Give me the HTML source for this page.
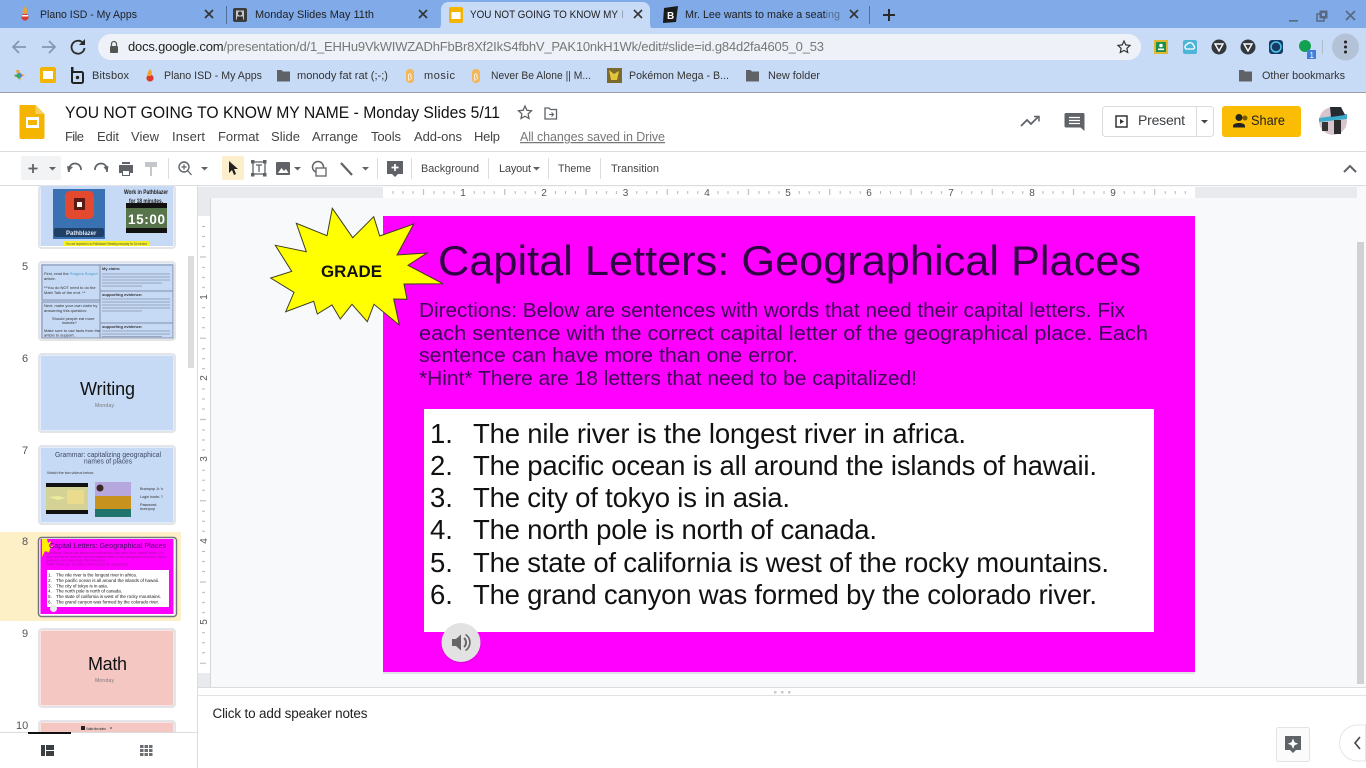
<!DOCTYPE html>
<html><head><meta charset="utf-8"><title>YOU NOT GOING TO KNOW MY NAME - Monday Slides 5/11</title>
<style>
html,body{margin:0;padding:0;width:1366px;height:768px;overflow:hidden;background:#fff}
svg{display:block}
text{font-family:"Liberation Sans",sans-serif;white-space:pre}
.tab{font-size:11px;fill:#202124}
.bm{font-size:11px;fill:#333}
.menu{font-size:13px;fill:#444}
.tb{font-size:11px;fill:#444}
.num{font-size:11px;fill:#555}
.r{font-size:10px;fill:#555}
.li{font-size:27.5px;fill:#111}
.dir{font-size:20px;fill:#3c0555}
.g{fill:#5f6368}
.s{stroke:#5f6368;fill:none;stroke-width:1.6}
.th{fill:#222}
</style></head><body>
<svg width="1366" height="768" viewBox="0 0 1366 768" xmlns="http://www.w3.org/2000/svg">
<defs>
<pattern id="rh" x="382.5" y="187" width="81.25" height="11" patternUnits="userSpaceOnUse">
<g fill="#b5b5b5"><rect x="10" y="4" width="1" height="3"/><rect x="20" y="4" width="1" height="3"/><rect x="30" y="4" width="1" height="3"/><rect x="40.5" y="2" width="1" height="6"/><rect x="51" y="4" width="1" height="3"/><rect x="61" y="4" width="1" height="3"/><rect x="71" y="4" width="1" height="3"/></g>
</pattern>
<pattern id="rv" x="198" y="216" width="12" height="81.25" patternUnits="userSpaceOnUse">
<g fill="#b5b5b5"><rect x="4" y="10" width="3" height="1"/><rect x="4" y="20" width="3" height="1"/><rect x="4" y="30" width="3" height="1"/><rect x="2" y="40.5" width="6" height="1"/><rect x="4" y="51" width="3" height="1"/><rect x="4" y="61" width="3" height="1"/><rect x="4" y="71" width="3" height="1"/></g>
</pattern>
</defs>

<!-- Browser chrome -->
<rect x="0" y="0" width="1366" height="30" fill="#80abe8"/>
<rect x="0" y="28" width="1366" height="64" fill="#c8dbf6"/>
<rect x="0" y="92" width="1366" height="1" fill="#9a9fa8"/>
<path d="M434 30c5 0 7-2 7-7V10c0-5 3-8 8-8h193c5 0 8 3 8 8v13c0 5 2 7 7 7z" fill="#c8dbf6"/>

<!-- tab 1 -->
<circle cx="25" cy="17" r="3.6" fill="#d93a2b"/><path d="M25 6c2 3 3 5 1 8h-3c-1-3 0-5 2-8z" fill="#eda32e"/><rect x="22" y="15" width="6" height="1.5" fill="#fff"/>
<text class="tab" x="40" y="18" textLength="97" lengthAdjust="spacingAndGlyphs">Plano ISD - My Apps</text>
<path d="M205 10l8 8M213 10l-8 8" stroke="#333" stroke-width="1.6"/>
<rect x="226" y="6" width="1" height="18" fill="#4f6f9e"/>
<!-- tab 2 -->
<rect x="233" y="8" width="14" height="14" rx="2" fill="#3b3b3b"/><rect x="236" y="10.5" width="8" height="9" fill="#c8c8c8"/><circle cx="240" cy="13.5" r="2" fill="#333"/><rect x="237" y="16.5" width="6" height="3" fill="#333"/>
<text class="tab" x="255" y="18" textLength="119" lengthAdjust="spacingAndGlyphs">Monday Slides May 11th</text>
<path d="M419 10l8 8M427 10l-8 8" stroke="#333" stroke-width="1.6"/>
<!-- tab 3 -->
<rect x="449" y="7" width="14" height="16" rx="2" fill="#f4b400"/><rect x="451.5" y="12" width="9" height="7" fill="#fff"/>
<text class="tab" x="470" y="18" textLength="148" lengthAdjust="spacingAndGlyphs">YOU NOT GOING TO KNOW MY</text>
<text class="tab" x="621" y="18" style="font-size:11px;fill:#9aa6b8">I</text>
<path d="M634 10l8 8M642 10l-8 8" stroke="#333" stroke-width="1.6"/>
<!-- tab 4 -->
<path d="M664 8l14-2-2 16-13 1z" fill="#1b1b1b"/><text x="667" y="19" style="font-size:10px;font-weight:700" fill="#fff">B</text>
<text class="tab" x="685" y="18" textLength="155" lengthAdjust="spacingAndGlyphs">Mr. Lee wants to make a seating</text>
<rect x="826" y="6" width="16" height="18" fill="#80abe8" opacity=".55"/>
<path d="M850 10l8 8M858 10l-8 8" stroke="#333" stroke-width="1.6"/>
<rect x="869" y="6" width="1" height="18" fill="#4f6f9e"/>
<path d="M889 9v12M883 15h12" stroke="#2a2a2a" stroke-width="2"/>
<!-- window ctrls -->
<rect x="1289" y="20" width="9" height="1.6" fill="#59697f"/>
<rect x="1317" y="14" width="7" height="7" fill="none" stroke="#59697f" stroke-width="1.5"/><rect x="1320" y="11" width="7" height="7" fill="#59697f" stroke="#59697f"/><rect x="1322" y="13" width="3" height="3" fill="#80abe8"/>
<path d="M1346 16l9 9M1355 16l-9 9" stroke="#59697f" stroke-width="1.7" transform="translate(0,-5)"/>

<!-- toolbar -->
<path d="M26 47H14M19 41l-6 6 6 6" fill="none" stroke="#8497b2" stroke-width="1.7"/>
<path d="M42 47h12M49 41l6 6-6 6" fill="none" stroke="#8497b2" stroke-width="1.7"/>
<path d="M83 43a6.5 6.5 0 1 0 1.5 5" fill="none" stroke="#2b2b2b" stroke-width="1.8"/><path d="M85 39v6h-6z" fill="#2b2b2b"/>
<rect x="98" y="34" width="1043" height="26" rx="13" fill="#eef2f8"/>
<rect x="110" y="46" width="8" height="7" rx="1" fill="#555"/><path d="M111.5 46v-2a2.5 2.5 0 0 1 5 0v2" fill="none" stroke="#555" stroke-width="1.2"/>
<text x="128" y="51" textLength="696" style="font-size:13px" fill="#777"><tspan fill="#222">docs.google.com</tspan>/presentation/d/1_EHHu9VkWIWZADhFbBr8Xf2IkS4fbhV_PAK10nkH1Wk/edit#slide=id.g84d2fa4605_0_53</text>
<path d="M1124 41l1.8 3.9 4.2.5-3.1 2.9.8 4.2-3.7-2.1-3.7 2.1.8-4.2-3.1-2.9 4.2-.5z" fill="none" stroke="#333" stroke-width="1.2"/>
<!-- extensions -->
<rect x="1154" y="40" width="14" height="14" fill="#e0b82f"/><rect x="1156" y="42" width="10" height="10" fill="#1e8e4e"/><circle cx="1161" cy="45.5" r="1.8" fill="#fff"/><rect x="1158" y="48.5" width="6" height="1.6" fill="#fff"/>
<rect x="1183" y="40" width="14" height="14" rx="2" fill="#4fb5d8"/><path d="M1186 49a2.5 2.5 0 0 1 1-4.5a3.5 3.5 0 0 1 6.500 1a2 2 0 0 1 0 3.500z" fill="none" stroke="#fff" stroke-width="1.3"/>
<circle cx="1219" cy="47" r="7.500" fill="#33383e"/><path d="M1215 44h8l-4 7z" fill="none" stroke="#fff" stroke-width="1.400"/>
<circle cx="1248" cy="47" r="7.500" fill="#33383e"/><path d="M1244 44h8l-4 7z" fill="none" stroke="#fff" stroke-width="1.400"/>
<rect x="1269" y="40" width="14" height="14" rx="3" fill="#163a66"/><circle cx="1276" cy="47" r="5" fill="none" stroke="#50c8e8" stroke-width="1.500"/>
<circle cx="1305" cy="46" r="6" fill="#12a150"/><rect x="1307" y="50" width="9" height="9" fill="#3f7fd9"/><text x="1309.500" y="58" style="font-size:8px" fill="#fff">1</text>
<rect x="1322" y="40" width="1" height="14" fill="#aebccc"/>
<circle cx="1345.500" cy="47" r="13.500" fill="#b3c2d6"/><circle cx="1345.500" cy="42" r="1.500" fill="#222"/><circle cx="1345.500" cy="47" r="1.500" fill="#222"/><circle cx="1345.500" cy="52" r="1.500" fill="#222"/>

<!-- bookmarks -->
<path d="M19 70l2 4 4 1-4 2-1 4-2-4-4 0 3-3-1-4z" fill="#e8a33a"/><circle cx="19.500" cy="75.500" r="2.500" fill="#4a86d8"/><path d="M14 75l5-1v5z" fill="#3aa860"/>
<rect x="40" y="67" width="16" height="16" rx="2" fill="#f4b400"/><rect x="43" y="71" width="10" height="8" fill="#fff"/>
<rect x="72" y="72" width="11" height="11" rx="1.500" fill="none" stroke="#222" stroke-width="2"/><rect x="71" y="67" width="2.500" height="6" fill="#222"/><circle cx="77.500" cy="77.500" r="1.700" fill="#222"/>
<text class="bm" x="92" y="79" textLength="37">Bitsbox</text>
<circle cx="150" cy="78" r="3.600" fill="#d93a2b"/><path d="M150 69c2 2 2.500 4 1 7h-3c-1-2-.5-4 2-7z" fill="#eda32e"/>
<text class="bm" x="164" y="79" textLength="98" lengthAdjust="spacingAndGlyphs">Plano ISD - My Apps</text>
<path d="M277 70h4.500l1.500 1.500H290v10h-13z" fill="#5f6368"/>
<text class="bm" x="297" y="79" textLength="91" lengthAdjust="spacingAndGlyphs">monody fat rat (;-;)</text>
<rect x="406" y="69" width="8" height="14" rx="3.500" fill="#f3b75a"/><text x="407.500" y="79.500" style="font-size:8px" fill="#fff">β</text>
<text class="bm" x="424" y="79" textLength="31">mosic</text>
<rect x="472" y="69" width="8" height="14" rx="3.500" fill="#f3b75a"/><text x="473.500" y="79.500" style="font-size:8px" fill="#fff">β</text>
<text class="bm" x="491" y="79" textLength="100" lengthAdjust="spacingAndGlyphs">Never Be Alone || M...</text>
<rect x="607" y="68" width="15" height="15" fill="#7b6a2c"/><path d="M609 70l5 4 5-3-2 9h-6z" fill="#e3c53c"/>
<text class="bm" x="629" y="79" textLength="100" lengthAdjust="spacingAndGlyphs">Pokémon Mega - B...</text>
<path d="M746 70h4.500l1.500 1.500H759v10h-13z" fill="#5f6368"/>
<text class="bm" x="768" y="79" textLength="52" lengthAdjust="spacingAndGlyphs">New folder</text>
<path d="M1239 70h4.500l1.500 1.500H1252v10h-13z" fill="#5f6368"/>
<text class="bm" x="1262" y="79" textLength="83" lengthAdjust="spacingAndGlyphs">Other bookmarks</text>

<!-- Docs header -->
<path d="M20 105h16l9 9v23a2 2 0 0 1-2 2H22a2 2 0 0 1-2-2z" fill="#f4b400" transform="translate(-.5,0)"/>
<path d="M35.500 105l9 9h-9z" fill="#f7cf5c"/>
<rect x="26" y="117" width="13" height="11" fill="#fff"/><rect x="28" y="120" width="9" height="5" fill="#f4b400"/>
<text x="65" y="118" textLength="435" lengthAdjust="spacingAndGlyphs" style="font-size:17px" fill="#111">YOU NOT GOING TO KNOW MY NAME - Monday Slides 5/11</text>
<path d="M525 106l1.900 4.300 4.600.5-3.400 3.100.9 4.600-4-2.300-4 2.300.9-4.600-3.400-3.100 4.600-.5z" fill="none" stroke="#5f6368" stroke-width="1.300"/>
<path d="M545 108h4l1.500 1.500h6v9.500H545z" fill="none" stroke="#5f6368" stroke-width="1.300"/><path d="M549 114.500h4M551.500 112.500l2 2-2 2" fill="none" stroke="#5f6368" stroke-width="1.100"/>
<g class="menu">
<text class="menu" x="65" y="141" textLength="19">File</text>
<text class="menu" x="97" y="141" textLength="22">Edit</text>
<text class="menu" x="131" y="141" textLength="28">View</text>
<text class="menu" x="172" y="141" textLength="33">Insert</text>
<text class="menu" x="218" y="141" textLength="41">Format</text>
<text class="menu" x="271" y="141" textLength="29">Slide</text>
<text class="menu" x="312" y="141" textLength="46">Arrange</text>
<text class="menu" x="371" y="141" textLength="30">Tools</text>
<text class="menu" x="414" y="141" textLength="48">Add-ons</text>
<text class="menu" x="474" y="141" textLength="26">Help</text>
</g>
<text x="520" y="141" textLength="145" style="font-size:12.500px;text-decoration:underline" fill="#777">All changes saved in Drive</text>
<!-- right header -->
<path d="M1021 126l6-6 4 4 7-7" fill="none" stroke="#5f6368" stroke-width="1.800"/><path d="M1034 116.500h5v5" fill="none" stroke="#5f6368" stroke-width="1.500"/>
<path d="M1066 113h17a1.500 1.500 0 0 1 1.500 1.500V131l-4-3.500h-14.500a1.500 1.500 0 0 1-1.500-1.500v-11.500a1.500 1.500 0 0 1 1.500-1.500z" fill="#5f6368"/><path d="M1069 117.500h11M1069 120.500h11M1069 123.500h11" stroke="#fff" stroke-width="1.200"/>
<rect x="1102.500" y="106.500" width="111" height="30" rx="3" fill="#fff" stroke="#dadce0"/>
<rect x="1196" y="107" width="1" height="29" fill="#dadce0"/>
<rect x="1116" y="116" width="11" height="11" fill="none" stroke="#333" stroke-width="1.500"/><path d="M1120 119l4 2.500-4 2.500z" fill="#333"/>
<text x="1138" y="125" textLength="47" style="font-size:14px" fill="#3c4043">Present</text>
<path d="M1201 120h7l-3.500 3.500z" fill="#444"/>
<rect x="1222" y="106" width="79" height="31" rx="3" fill="#fbbc04"/>
<circle cx="1239" cy="117.500" r="3.500" fill="#222"/><path d="M1233 126c0-4 12-4 12 0v1.500h-12z" fill="#222"/><circle cx="1245" cy="118" r="2.500" fill="#7a5a00"/>
<text x="1251" y="125" textLength="34" lengthAdjust="spacingAndGlyphs" style="font-size:14px" fill="#222">Share</text>
<circle cx="1333" cy="121" r="14" fill="#d7c4cf"/><path d="M1319 118l28-4 0 5-28 3z" fill="#3baccb"/><path d="M1330 107h11l4 8-14 2z" fill="#262b30"/><rect x="1322" y="122" width="6" height="9" fill="#333"/><rect x="1334" y="120" width="7" height="14" fill="#2b2b2b"/>
<rect x="0" y="151" width="1366" height="1" fill="#dadce0"/>

<!-- Docs toolbar -->
<rect x="21" y="156" width="40" height="24" rx="2" fill="#f1f3f4"/>
<path d="M33 164v9M28.500 168.500h9" stroke="#5f6368" stroke-width="1.800"/><path d="M49 167h7l-3.500 3.500z" class="g"/>
<path d="M69 172v-3a5 5 0 0 1 12 1" fill="none" stroke="#5f6368" stroke-width="1.700"/><path d="M67 165l6 1-5 5z" class="g" transform="translate(0,1)"/>
<path d="M107 172v-3a5 5 0 0 0-12 1" fill="none" stroke="#5f6368" stroke-width="1.700"/><path d="M108.500 165l-5 1 4 5z" class="g" transform="translate(0,1)"/>
<path d="M119 165h14v8h-3v3h-8v-3h-3zM122 162h8v2h-8z" class="g"/><rect x="123" y="171" width="6" height="4" fill="#fff"/>
<path d="M145 162h12v5h-12zM150 167h2v9h-2z" fill="#c3c6ca"/>
<rect x="168" y="158" width="1" height="21" fill="#dadce0"/>
<circle cx="184" cy="167" r="5" fill="none" stroke="#5f6368" stroke-width="1.400"/><path d="M188 171l3.500 4M184 164.500v5M181.500 167h5" stroke="#5f6368" stroke-width="1.300"/><path d="M201 167h7l-3.500 3.500z" class="g"/>
<rect x="222" y="156" width="22" height="24" rx="2" fill="#fdeecb"/>
<path d="M229 161l9 8h-4l2 5-2 1-2-5-3 3z" fill="#222"/>
<rect x="253" y="162" width="12" height="12" fill="none" stroke="#5f6368" stroke-width="1.300"/><g class="g"><rect x="251" y="160" width="3.500" height="3.500"/><rect x="263" y="160" width="3.500" height="3.500"/><rect x="251" y="173" width="3.500" height="3.500"/><rect x="263" y="173" width="3.500" height="3.500"/></g><path d="M256 165h6M259 165v7" stroke="#5f6368" stroke-width="1.300"/>
<rect x="276" y="162" width="14" height="13" rx="1" class="g"/><path d="M278 173l3.500-5 2.500 3 2-2 2.500 4z" fill="#fff"/><path d="M294 167h7l-3.500 3.500z" class="g"/>
<circle cx="318" cy="167" r="5.500" fill="none" stroke="#5f6368" stroke-width="1.500"/><rect x="316" y="168" width="10" height="8" fill="#fff" stroke="#5f6368" stroke-width="1.300"/>
<path d="M341 163l11 12" stroke="#5f6368" stroke-width="2.200"/><path d="M362 167h7l-3.500 3.500z" class="g"/>
<rect x="377" y="158" width="1" height="21" fill="#dadce0"/>
<path d="M387 161h16v13h-5l-3 3-3-3h-5z" class="g"/><path d="M395 164v7M391.500 167.500h7" stroke="#fff" stroke-width="1.700"/>
<rect x="411" y="158" width="1" height="21" fill="#dadce0"/>
<text class="tb" x="421" y="172" textLength="58" lengthAdjust="spacingAndGlyphs">Background</text>
<rect x="488" y="158" width="1" height="21" fill="#dadce0"/>
<text class="tb" x="499" y="172" textLength="32">Layout</text><path d="M533 167h7l-3.500 3.500z" class="g"/>
<rect x="548" y="158" width="1" height="21" fill="#dadce0"/>
<text class="tb" x="558" y="172" textLength="33" lengthAdjust="spacingAndGlyphs">Theme</text>
<rect x="600" y="158" width="1" height="21" fill="#dadce0"/>
<text class="tb" x="611" y="172" textLength="48">Transition</text>
<path d="M1344 172l6-6 6 6" fill="none" stroke="#5f6368" stroke-width="2"/>
<rect x="0" y="185" width="1366" height="1" fill="#dadce0"/>

<!-- Workspace -->
<rect x="198" y="186" width="1168" height="504" fill="#f8f9fa"/>
<rect x="198" y="187" width="1159" height="11" fill="#e8eaed"/>
<rect x="383" y="187" width="812" height="11" fill="#fff"/><rect x="383" y="187" width="812" height="11" fill="url(#rh)"/>
<rect x="198" y="187" width="12" height="30" fill="#e8eaed"/>
<rect x="198" y="216" width="12" height="457" fill="#fff"/><rect x="198" y="216" width="12" height="457" fill="url(#rv)"/>
<rect x="198" y="673" width="12" height="14" fill="#e8eaed"/>
<rect x="210" y="198" width="1" height="490" fill="#d5d7da"/>
<text class="r" x="463" y="196" text-anchor="middle">1</text><text class="r" x="544" y="196" text-anchor="middle">2</text><text class="r" x="625.500" y="196" text-anchor="middle">3</text><text class="r" x="707" y="196" text-anchor="middle">4</text><text class="r" x="788" y="196" text-anchor="middle">5</text><text class="r" x="869" y="196" text-anchor="middle">6</text><text class="r" x="951" y="196" text-anchor="middle">7</text><text class="r" x="1032" y="196" text-anchor="middle">8</text><text class="r" x="1113" y="196" text-anchor="middle">9</text>
<text class="r" transform="translate(207,297) rotate(-90)" text-anchor="middle">1</text><text class="r" transform="translate(207,378) rotate(-90)" text-anchor="middle">2</text><text class="r" transform="translate(207,459) rotate(-90)" text-anchor="middle">3</text><text class="r" transform="translate(207,541) rotate(-90)" text-anchor="middle">4</text><text class="r" transform="translate(207,622) rotate(-90)" text-anchor="middle">5</text>
<!-- main slide -->
<rect x="383" y="217" width="812" height="457" fill="#c9c9d6" opacity=".5"/>
<rect x="383" y="216" width="812" height="456" fill="#ff00ff"/>
<text x="438" y="275" textLength="703" lengthAdjust="spacingAndGlyphs" style="font-size:42px" fill="#2e0442">Capital Letters: Geographical Places</text>
<text class="dir" x="419" y="317" textLength="706" lengthAdjust="spacingAndGlyphs">Directions: Below are sentences with words that need their capital letters. Fix</text>
<text class="dir" x="419" y="340" textLength="729" lengthAdjust="spacingAndGlyphs">each sentence with the correct capital letter of the geographical place. Each</text>
<text class="dir" x="419" y="362" textLength="379" lengthAdjust="spacingAndGlyphs">sentence can have more than one error.</text>
<text class="dir" x="419" y="385" textLength="498" lengthAdjust="spacingAndGlyphs">*Hint* There are 18 letters that need to be capitalized!</text>
<rect x="424" y="409" width="730" height="223" fill="#fff"/>
<g>
<text class="li" x="430" y="443">1.</text><text class="li" x="473" y="443" textLength="493">The nile river is the longest river in africa.</text>
<text class="li" x="430" y="475">2.</text><text class="li" x="473" y="475" textLength="624">The pacific ocean is all around the islands of hawaii.</text>
<text class="li" x="430" y="507">3.</text><text class="li" x="473" y="507" textLength="317">The city of tokyo is in asia.</text>
<text class="li" x="430" y="539">4.</text><text class="li" x="473" y="539" textLength="404">The north pole is north of canada.</text>
<text class="li" x="430" y="572">5.</text><text class="li" x="473" y="572" textLength="636">The state of california is west of the rocky mountains.</text>
<text class="li" x="430" y="604">6.</text><text class="li" x="473" y="604" textLength="624">The grand canyon was formed by the colorado river.</text>
</g>
<circle cx="461" cy="643.500" r="20" fill="#000" opacity=".1"/>
<circle cx="461" cy="642.500" r="19.500" fill="#e2e2e2"/>
<path d="M452 639h4l5-4.500v16l-5-4.500h-4z" fill="#666"/><path d="M464 638a6 6 0 0 1 0 9" fill="none" stroke="#666" stroke-width="2"/><path d="M465.500 634.500a9.500 9.500 0 0 1 0 16" fill="none" stroke="#666" stroke-width="1.600"/>
<polygon points="332.300,208.300 352.700,237.700 373.700,216.700 379.700,236 413.700,224 397,255 427,253 408,265.300 443,283.700 404,284 407,299.300 393.700,299 399.300,325 374,304.300 367.300,321.700 352,304.300 340.300,319 332,305 317.300,314 313.700,301.300 285.700,311.700 294,292.300 270.700,278 291.700,271.300 275.300,245.300 306.300,251.700 296.300,223.300 327,235.700" fill="#ffff00" stroke="#3d3d20" stroke-width="1"/>
<text x="321" y="277" textLength="61" lengthAdjust="spacingAndGlyphs" style="font-size:17px;font-weight:700" fill="#111">GRADE</text>
<!-- scrollbar -->
<rect x="1357" y="242" width="7" height="442" fill="#d0d1d3"/>
<rect x="198" y="687" width="1168" height="1" fill="#dadce0"/>
<rect x="198" y="688" width="1168" height="7" fill="#fff"/>
<rect x="198" y="695" width="1168" height="1" fill="#e0e2e5"/>
<g fill="#c8cacc"><rect x="774" y="691" width="2.500" height="2.500"/><rect x="781" y="691" width="2.500" height="2.500"/><rect x="788" y="691" width="2.500" height="2.500"/></g>
<text x="212.500" y="718" textLength="155" style="font-size:13.500px" fill="#222">Click to add speaker notes</text>
<rect x="1276.500" y="727.500" width="33" height="34" rx="2" fill="#fbfbfb" stroke="#e2e3e5"/>
<path d="M1285 736h16v14h-5l-3 3-3-3h-5z" class="g"/><path d="M1293 738.500l1.500 3.700 3.700 1.500-3.700 1.500-1.500 3.700-1.500-3.700-3.700-1.500 3.700-1.500z" fill="#fff"/>
<path d="M1366 725h-8a18 18 0 0 0 0 36h8z" fill="#fff" stroke="#e4e5e7" transform="translate(-.5,0)"/><path d="M1360 737l-5 6 5 6" fill="none" stroke="#444" stroke-width="1.600"/>

<!-- Filmstrip -->
<rect x="0" y="186" width="197" height="582" fill="#fff"/>
<rect x="197" y="186" width="1" height="582" fill="#dadce0"/>
<rect x="188" y="256" width="6" height="112" fill="#dcdcdc"/>
<rect x="0" y="532" width="181" height="89" rx="2" fill="#fdefc6"/>

<!-- 4 -->
<rect x="39" y="186" width="136" height="62" rx="3" fill="#fff" stroke="#e3e4e8" stroke-width="2"/>
<rect x="40.500" y="186" width="133" height="60" fill="#c6d9f5"/>
<rect x="53" y="189" width="52" height="50" fill="#3a71b2"/><rect x="65" y="191" width="29" height="28" rx="5" fill="#e2492f"/><rect x="74" y="198" width="11" height="12" fill="#5a1c12"/><rect x="77" y="202" width="5" height="5" fill="#fff"/>
<rect x="54" y="228" width="50" height="9" rx="2" fill="#1f3f66"/><text x="66" y="235" style="font-size:6px;font-weight:700" fill="#dfe9f6">Pathblazer</text>
<text x="124" y="194" textLength="44" lengthAdjust="spacingAndGlyphs" style="font-size:6px;font-weight:700" fill="#222">Work in Pathblazer</text>
<text x="129" y="203" textLength="34" lengthAdjust="spacingAndGlyphs" style="font-size:6px;font-weight:700" fill="#222">for 18 minutes.</text>
<rect x="126" y="203" width="41" height="30" fill="#111"/><rect x="126" y="208" width="41" height="20" fill="#57744a"/>
<text x="128" y="224" textLength="37" style="font-size:13.500px;font-weight:700" fill="#fff">15:00</text>
<rect x="64" y="241" width="85" height="5" fill="#f5f11f"/><text x="66" y="245" textLength="81" lengthAdjust="spacingAndGlyphs" style="font-size:3.500px" fill="#555">You are required to do Pathblazer! Reading everyday for 18 minutes</text>
<!-- 5 -->
<text class="num" x="22" y="270">5</text>
<rect x="39" y="262" width="136" height="78" rx="3" fill="#fff" stroke="#e3e4e8" stroke-width="2"/>
<rect x="40.500" y="263.500" width="133" height="75" fill="#c6d9f5"/>
<rect x="42" y="265" width="58" height="35" fill="none" stroke="#8390a6"/><rect x="42" y="302" width="58" height="36" fill="none" stroke="#8390a6"/><rect x="100" y="265" width="73" height="73" fill="none" stroke="#8390a6"/>
<path d="M100 291h73M100 323h73" stroke="#8390a6"/>
<text x="44" y="275" style="font-size:4px" fill="#333">First, read the <tspan fill="#4a9fc9">Rutgers Burger!</tspan></text><text x="44" y="280" style="font-size:4px" fill="#333">article.</text>
<text x="44" y="289" style="font-size:4px" fill="#333">**You do NOT need to do the</text><text x="44" y="294" style="font-size:4px" fill="#333">Math Talk of the end. **</text>
<text x="44" y="307" style="font-size:4px" fill="#333">Next, make your own claim by</text><text x="44" y="312" style="font-size:4px" fill="#333">answering this question:</text>
<text x="52" y="320" style="font-size:4px" fill="#333">Should people eat more</text><text x="62" y="324" style="font-size:4px" fill="#333">insects?</text>
<text x="44" y="332" style="font-size:4px" fill="#333">Make sure to use facts from the</text><text x="44" y="336.500" style="font-size:4px" fill="#333">article to support.</text>
<text x="102" y="270" style="font-size:4px;font-weight:700" fill="#333">My claim:</text>
<text x="102" y="296" style="font-size:4px;font-weight:700" fill="#333">supporting evidence:</text>
<text x="102" y="328" style="font-size:4px;font-weight:700" fill="#333">supporting evidence:</text>
<g stroke="#97a5bf" stroke-width=".9"><path d="M102 274h68M102 277h68M102 280h68M102 283h60M102 286h40M102 299h68M102 302h68M102 305h68M102 308h68M102 311h40M102 331h68M102 334h68M102 336.500h60"/></g>
<!-- 6 -->
<text class="num" x="22" y="362">6</text>
<rect x="39" y="354" width="136" height="78" rx="3" fill="#fff" stroke="#e3e4e8" stroke-width="2"/>
<rect x="40.500" y="355.500" width="133" height="75" fill="#c6d9f5"/>
<text x="80" y="395" textLength="55" style="font-size:18px" fill="#111">Writing</text>
<text x="95" y="407" textLength="19" style="font-size:5px" fill="#777">Monday</text>
<!-- 7 -->
<text class="num" x="22" y="454">7</text>
<rect x="39" y="446" width="136" height="78" rx="3" fill="#fff" stroke="#e3e4e8" stroke-width="2"/>
<rect x="40.500" y="447.500" width="133" height="75" fill="#c6d9f5"/>
<text x="55" y="457" textLength="106" lengthAdjust="spacingAndGlyphs" style="font-size:7.500px" fill="#3d4a66">Grammar: capitalizing geographical</text>
<text x="84" y="463.500" textLength="48" lengthAdjust="spacingAndGlyphs" style="font-size:7.500px" fill="#3d4a66">names of places</text>
<text x="47" y="474" textLength="47" style="font-size:4px" fill="#444">Watch the two videos below.</text>
<rect x="46" y="483" width="42" height="31" fill="#111"/><rect x="46" y="487" width="42" height="23" fill="#d4d294"/><path d="M48 497l10-1 8 2-8 2z" fill="#ecec9d"/><rect x="67" y="490" width="17" height="14" rx="2" fill="#eadc8c"/>
<rect x="95" y="482" width="36" height="35" fill="#b6a7df"/><rect x="95" y="496" width="36" height="13" fill="#c7921e"/><rect x="95" y="509" width="36" height="8" fill="#21736d"/><circle cx="100" cy="488" r="3.500" fill="#3a2a20"/>
<text x="140" y="490" textLength="23" style="font-size:3.800px" fill="#333">Brainpop Jr.'s</text><text x="140" y="498" textLength="23" style="font-size:3.800px" fill="#333">Login hosts: ?</text><text x="140" y="506" textLength="17" style="font-size:3.800px" fill="#333">Password:</text><text x="140" y="510" textLength="15" style="font-size:3.800px" fill="#333">brainpop</text>
<!-- 8 -->
<text class="num" x="22" y="545">8</text>
<rect x="38.500" y="537.500" width="138" height="79" rx="3" fill="#fff" stroke="#70757a" stroke-width="1.500"/>
<rect x="40.500" y="539" width="133" height="75" fill="#ff00ff"/>
<polygon points="47,539 48,543 51,541 50,547 54,545 50,549 49,553 45,551 42,557 42,539" fill="#ffee00"/>
<text x="49" y="548" textLength="117" lengthAdjust="spacingAndGlyphs" style="font-size:7.500px" fill="#4a0a6a">Capital Letters: Geographical Places</text>
<g fill="#a3149d"><text x="46" y="554" textLength="118" lengthAdjust="spacingAndGlyphs" style="font-size:3.500px">Directions: Below are sentences with words that need their capital letters. Fix</text><text x="46" y="558" textLength="120" lengthAdjust="spacingAndGlyphs" style="font-size:3.500px">each sentence with the correct capital letter of the geographical place. Each</text><text x="46" y="561.500" textLength="60" lengthAdjust="spacingAndGlyphs" style="font-size:3.500px">sentence can have more than one error.</text><text x="46" y="565.500" textLength="82" lengthAdjust="spacingAndGlyphs" style="font-size:3.500px">*Hint* There are 18 letters that need to be capitalized!</text></g>
<rect x="47" y="570" width="122" height="37" fill="#fff"/>
<g fill="#222"><text x="48" y="576.500" style="font-size:4.600px">1.</text><text x="56" y="576.500" textLength="81" style="font-size:4.600px">The nile river is the longest river in africa.</text>
<text x="48" y="581.800" style="font-size:4.600px">2.</text><text x="56" y="581.800" textLength="103" style="font-size:4.600px">The pacific ocean is all around the islands of hawaii.</text>
<text x="48" y="587.300" style="font-size:4.600px">3.</text><text x="56" y="587.300" textLength="52" style="font-size:4.600px">The city of tokyo is in asia.</text>
<text x="48" y="592.600" style="font-size:4.600px">4.</text><text x="56" y="592.600" textLength="66" style="font-size:4.600px">The north pole is north of canada.</text>
<text x="48" y="597.800" style="font-size:4.600px">5.</text><text x="56" y="597.800" textLength="105" style="font-size:4.600px">The state of california is west of the rocky mountains.</text>
<text x="48" y="603.500" style="font-size:4.600px">6.</text><text x="56" y="603.500" textLength="103" style="font-size:4.600px">The grand canyon was formed by the colorado river.</text></g>
<circle cx="53.500" cy="608.500" r="3.500" fill="#eee"/>
<!-- 9 -->
<text class="num" x="22" y="637">9</text>
<rect x="39" y="629" width="136" height="78" rx="3" fill="#fff" stroke="#e3e4e8" stroke-width="2"/>
<rect x="40.500" y="630.500" width="133" height="75" fill="#f4c7c3"/>
<text x="88" y="670" textLength="39" style="font-size:18px" fill="#111">Math</text>
<text x="95" y="682" textLength="19" style="font-size:5px" fill="#777">Monday</text>
<!-- 10 -->
<text class="num" x="16" y="729">10</text>
<rect x="39" y="721" width="136" height="20" rx="3" fill="#fff" stroke="#e3e4e8" stroke-width="2"/>
<rect x="40.500" y="722.500" width="133" height="16" fill="#f4c7c3"/>
<rect x="81" y="726" width="4" height="4" fill="#222"/><text x="86" y="730" textLength="20" style="font-size:3.800px" fill="#444">Watch the video</text><path d="M110 728l2 0" stroke="#444"/>
<!-- bottom -->
<rect x="0" y="733" width="197" height="35" fill="#fff"/>
<rect x="0" y="732" width="197" height="1" fill="#dadce0"/>
<rect x="28" y="732" width="43" height="2" fill="#111"/>
<path d="M41 745h4v11h-4zM46 745h8v5h-8zM46 751h8v5h-8z" fill="#3c4043"/>
<path d="M140 745h3.500v3h-3.500zM144.500 745h3.500v3h-3.500zM149 745h3.500v3H149zM140 749h3.500v3h-3.500zM144.500 749h3.500v3h-3.500zM149 749h3.500v3H149zM140 753h3.500v3h-3.500zM144.500 753h3.500v3h-3.500zM149 753h3.500v3H149z" fill="#6b6f73"/>
</svg>
</body></html>
